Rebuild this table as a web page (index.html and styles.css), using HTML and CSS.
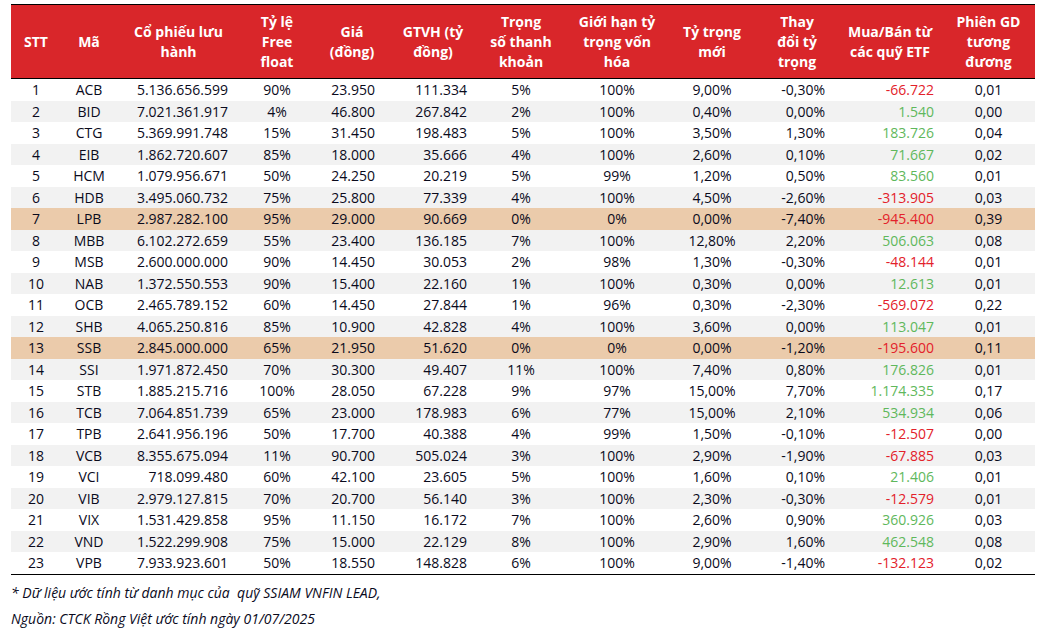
FILE: index.html
```html
<!DOCTYPE html>
<html lang="vi">
<head>
<meta charset="utf-8">
<title>ETF</title>
<link rel="stylesheet" href="styles.css">
</head>
<body>
<div class="page">
<table class="etf">
<colgroup>
<col style="width:50px"><col style="width:56px"><col style="width:123px"><col style="width:74px"><col style="width:76px"><col style="width:86px"><col style="width:90px"><col style="width:102px"><col style="width:88px"><col style="width:82px"><col style="width:104px"><col style="width:93px">
</colgroup>
<thead>
<tr>
<th>STT</th><th>Mã</th><th>Cổ phiếu lưu<br>hành</th><th>Tỷ lệ<br>Free<br>float</th><th>Giá<br>(đồng)</th><th>GTVH (tỷ<br>đồng)</th><th>Trọng<br>số thanh<br>khoản</th><th>Giới hạn tỷ<br>trọng vốn<br>hóa</th><th>Tỷ trọng<br>mới</th><th>Thay<br>đổi tỷ<br>trọng</th><th>Mua/Bán từ<br>các quỹ ETF</th><th>Phiên GD<br>tương<br>đương</th>
</tr>
</thead>
<tbody>
<tr><td>1</td><td>ACB</td><td class="r shares">5.136.656.599</td><td>90%</td><td class="r price">23.950</td><td class="r gtvh">111.334</td><td>5%</td><td>100%</td><td>9,00%</td><td class="r chg">-0,30%</td><td class="r etf neg">-66.722</td><td>0,01</td></tr>
<tr><td>2</td><td>BID</td><td class="r shares">7.021.361.917</td><td>4%</td><td class="r price">46.800</td><td class="r gtvh">267.842</td><td>2%</td><td>100%</td><td>0,40%</td><td class="r chg">0,00%</td><td class="r etf pos">1.540</td><td>0,00</td></tr>
<tr><td>3</td><td>CTG</td><td class="r shares">5.369.991.748</td><td>15%</td><td class="r price">31.450</td><td class="r gtvh">198.483</td><td>5%</td><td>100%</td><td>3,50%</td><td class="r chg">1,30%</td><td class="r etf pos">183.726</td><td>0,04</td></tr>
<tr><td>4</td><td>EIB</td><td class="r shares">1.862.720.607</td><td>85%</td><td class="r price">18.000</td><td class="r gtvh">35.666</td><td>4%</td><td>100%</td><td>2,60%</td><td class="r chg">0,10%</td><td class="r etf pos">71.667</td><td>0,02</td></tr>
<tr><td>5</td><td>HCM</td><td class="r shares">1.079.956.671</td><td>50%</td><td class="r price">24.250</td><td class="r gtvh">20.219</td><td>5%</td><td>99%</td><td>1,20%</td><td class="r chg">0,50%</td><td class="r etf pos">83.560</td><td>0,01</td></tr>
<tr><td>6</td><td>HDB</td><td class="r shares">3.495.060.732</td><td>75%</td><td class="r price">25.800</td><td class="r gtvh">77.339</td><td>4%</td><td>100%</td><td>4,50%</td><td class="r chg">-2,60%</td><td class="r etf neg">-313.905</td><td>0,03</td></tr>
<tr class="hl"><td>7</td><td>LPB</td><td class="r shares">2.987.282.100</td><td>95%</td><td class="r price">29.000</td><td class="r gtvh">90.669</td><td>0%</td><td>0%</td><td>0,00%</td><td class="r chg">-7,40%</td><td class="r etf neg">-945.400</td><td>0,39</td></tr>
<tr><td>8</td><td>MBB</td><td class="r shares">6.102.272.659</td><td>55%</td><td class="r price">23.400</td><td class="r gtvh">136.185</td><td>7%</td><td>100%</td><td>12,80%</td><td class="r chg">2,20%</td><td class="r etf pos">506.063</td><td>0,08</td></tr>
<tr><td>9</td><td>MSB</td><td class="r shares">2.600.000.000</td><td>90%</td><td class="r price">14.450</td><td class="r gtvh">30.053</td><td>2%</td><td>98%</td><td>1,30%</td><td class="r chg">-0,30%</td><td class="r etf neg">-48.144</td><td>0,01</td></tr>
<tr><td>10</td><td>NAB</td><td class="r shares">1.372.550.553</td><td>90%</td><td class="r price">15.400</td><td class="r gtvh">22.160</td><td>1%</td><td>100%</td><td>0,30%</td><td class="r chg">0,00%</td><td class="r etf pos">12.613</td><td>0,01</td></tr>
<tr><td>11</td><td>OCB</td><td class="r shares">2.465.789.152</td><td>60%</td><td class="r price">14.450</td><td class="r gtvh">27.844</td><td>1%</td><td>96%</td><td>0,30%</td><td class="r chg">-2,30%</td><td class="r etf neg">-569.072</td><td>0,22</td></tr>
<tr><td>12</td><td>SHB</td><td class="r shares">4.065.250.816</td><td>85%</td><td class="r price">10.900</td><td class="r gtvh">42.828</td><td>4%</td><td>100%</td><td>3,60%</td><td class="r chg">0,00%</td><td class="r etf pos">113.047</td><td>0,01</td></tr>
<tr class="hl"><td>13</td><td>SSB</td><td class="r shares">2.845.000.000</td><td>65%</td><td class="r price">21.950</td><td class="r gtvh">51.620</td><td>0%</td><td>0%</td><td>0,00%</td><td class="r chg">-1,20%</td><td class="r etf neg">-195.600</td><td>0,11</td></tr>
<tr><td>14</td><td>SSI</td><td class="r shares">1.971.872.450</td><td>70%</td><td class="r price">30.300</td><td class="r gtvh">49.407</td><td>11%</td><td>100%</td><td>7,40%</td><td class="r chg">0,80%</td><td class="r etf pos">176.826</td><td>0,01</td></tr>
<tr><td>15</td><td>STB</td><td class="r shares">1.885.215.716</td><td>100%</td><td class="r price">28.050</td><td class="r gtvh">67.228</td><td>9%</td><td>97%</td><td>15,00%</td><td class="r chg">7,70%</td><td class="r etf pos">1.174.335</td><td>0,17</td></tr>
<tr><td>16</td><td>TCB</td><td class="r shares">7.064.851.739</td><td>65%</td><td class="r price">23.000</td><td class="r gtvh">178.983</td><td>6%</td><td>77%</td><td>15,00%</td><td class="r chg">2,10%</td><td class="r etf pos">534.934</td><td>0,06</td></tr>
<tr><td>17</td><td>TPB</td><td class="r shares">2.641.956.196</td><td>50%</td><td class="r price">17.700</td><td class="r gtvh">40.388</td><td>4%</td><td>99%</td><td>1,50%</td><td class="r chg">-0,10%</td><td class="r etf neg">-12.507</td><td>0,00</td></tr>
<tr><td>18</td><td>VCB</td><td class="r shares">8.355.675.094</td><td>11%</td><td class="r price">90.700</td><td class="r gtvh">505.024</td><td>3%</td><td>100%</td><td>2,90%</td><td class="r chg">-1,90%</td><td class="r etf neg">-67.885</td><td>0,03</td></tr>
<tr><td>19</td><td>VCI</td><td class="r shares">718.099.480</td><td>60%</td><td class="r price">42.100</td><td class="r gtvh">23.605</td><td>5%</td><td>100%</td><td>1,60%</td><td class="r chg">0,10%</td><td class="r etf pos">21.406</td><td>0,01</td></tr>
<tr><td>20</td><td>VIB</td><td class="r shares">2.979.127.815</td><td>70%</td><td class="r price">20.700</td><td class="r gtvh">56.140</td><td>3%</td><td>100%</td><td>2,30%</td><td class="r chg">-0,30%</td><td class="r etf neg">-12.579</td><td>0,01</td></tr>
<tr><td>21</td><td>VIX</td><td class="r shares">1.531.429.858</td><td>95%</td><td class="r price">11.150</td><td class="r gtvh">16.172</td><td>7%</td><td>100%</td><td>2,60%</td><td class="r chg">0,90%</td><td class="r etf pos">360.926</td><td>0,03</td></tr>
<tr><td>22</td><td>VND</td><td class="r shares">1.522.299.908</td><td>75%</td><td class="r price">15.000</td><td class="r gtvh">22.129</td><td>8%</td><td>100%</td><td>2,90%</td><td class="r chg">1,60%</td><td class="r etf pos">462.548</td><td>0,08</td></tr>
<tr><td>23</td><td>VPB</td><td class="r shares">7.933.923.601</td><td>50%</td><td class="r price">18.550</td><td class="r gtvh">148.828</td><td>6%</td><td>100%</td><td>9,00%</td><td class="r chg">-1,40%</td><td class="r etf neg">-132.123</td><td>0,02</td></tr>
</tbody>
</table>
<p class="note">* Dữ liệu ước tính từ danh mục của &nbsp;quỹ SSIAM VNFIN LEAD,</p>
<p class="note">Nguồn: CTCK Rồng Việt ước tính ngày 01/07/2025</p>
</div>
</body>
</html>
```
FILE: styles.css
```css
html, body {
  margin: 0;
  padding: 0;
  background: #ffffff;
}
.page {
  padding: 4px 6px 0 11px;
  font-family: "Open Sans", "Noto Sans", sans-serif;
  color: #0a0a1c;
}
.etf {
  width: 1024px;
  table-layout: fixed;
  border-collapse: collapse;
  font-size: 14px;
}
.etf thead tr {
  background: #d9262a;
  border-top: 1px solid #000;
  border-bottom: 1px solid #000;
}
.etf th {
  color: #ffffff;
  font-weight: 700;
  font-size: 14px;
  line-height: 20px;
  height: 73px;
  padding: 0;
  text-align: center;
  vertical-align: middle;
}
.etf td {
  height: 21.5px;
  padding: 0;
  line-height: 21.5px;
  text-align: center;
  white-space: nowrap;
  font-weight: 500;
}
.etf tbody tr:nth-child(even) {
  background: #f2f2f2;
}
.etf tbody tr.hl {
  background: #ebcbab;
}
.etf tbody tr:last-child {
  border-bottom: 1px solid #000;
}
.etf td.r { text-align: right; }
.etf td.shares { padding-right: 12px; }
.etf td.price { padding-right: 15px; }
.etf td.gtvh { padding-right: 9px; }
.etf td.chg { padding-right: 13px; }
.etf td.etf { padding-right: 8px; }
.neg { color: #e3212a; }
.pos { color: #5fb85c; }
.note {
  margin: 0;
  font-style: italic;
  font-size: 14px;
  line-height: 26px;
}
.note:first-of-type { margin-top: 5px; }
```
